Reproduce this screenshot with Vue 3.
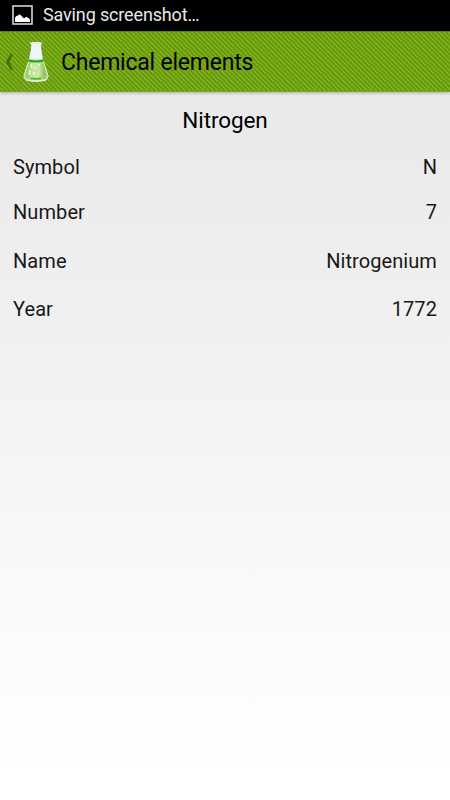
<script setup>
const rows = [
  { label: 'Symbol', value: 'N', size: 'h47' },
  { label: 'Number', value: '7', size: 'h43' },
  { label: 'Name', value: 'Nitrogenium', size: 'h55' },
  { label: 'Year', value: '1772', size: 'h41' },
]
</script>

<template>
  <div class="screen">
    <div class="status">
      <svg class="photo" width="21" height="20" viewBox="0 0 21 20">
        <rect x="1" y="1" width="19" height="18" fill="#000" stroke="#d6d6d6" stroke-width="1.6" />
        <path d="M3 17V12.5L4.5 11L6 10.5L7 9.5H8L10 11.5L12 13.5L14 11.8L16 12.8L18 14.5V17Z" fill="#fff" />
      </svg>
      <span class="status-text">Saving screenshot…</span>
    </div>
    <header class="bar">
      <svg class="back" width="10" height="18" viewBox="0 0 10 18">
        <path d="M8 1L3.6 9L8 17" fill="none" stroke="#47700c" stroke-width="2.9" />
      </svg>
      <svg class="flask" width="28" height="42" viewBox="0 0 28 42">
        <defs>
          <linearGradient id="liquid" x1="0" x2="1" y1="0" y2="0">
            <stop offset="0" stop-color="#8fc65c" />
            <stop offset=".3" stop-color="#c2e69e" />
            <stop offset=".65" stop-color="#c8eaa6" />
            <stop offset="1" stop-color="#84b952" />
          </linearGradient>
        </defs>
        <path d="M7 18L4.5 25L1.8 34.5Q1.2 38 5 39.5Q14 41.5 23 39.5Q26.8 38 26.2 34.5L23 25L21 18Z" fill="#c4dfa8" fill-opacity=".7" />
        <path d="M9.5 2.5H18.8L19.4 9L21 18.5H6.8L8.8 9Z" fill="#eef4f9" />
        <path d="M7 20H21L23.4 33Q24 37 20 37.5H8Q4 37 4.6 33Z" fill="url(#liquid)" />
        <path d="M6.6 18.6Q14 20.8 21.2 18.6V20.8Q14 22 6.6 20.8Z" fill="#16a81c" />
        <path d="M8 2.6Q14 1 20 2.6" fill="none" stroke="#fff" stroke-width="1.6" />
        <path d="M6.5 21L2.2 34Q1.4 38 5 39M21.5 21L25.8 34Q26.6 38 23 39" fill="none" stroke="#d9edc5" stroke-width="1" />
        <path d="M4 38.8Q14 41.4 24 38.8" fill="none" stroke="#e7f1dd" stroke-width="1.6" />
        <path d="M9 37.2Q14 38.2 19 37.2" fill="none" stroke="#4cba2c" stroke-width="1.5" />
        <path d="M9.5 23V27M7.5 29V34M13 26V28M12 31V33M17 23V25" stroke="#f4fdec" stroke-width="1.4" />
      </svg>
      <span class="title">Chemical elements</span>
    </header>
    <main class="content">
      <h1 class="name">Nitrogen</h1>
      <div v-for="row in rows" :key="row.label" class="row" :class="row.size">
        <span>{{ row.label }}</span>
        <span>{{ row.value }}</span>
      </div>
    </main>
  </div>
</template>

<style>
body { margin: 0; }
</style>

<style scoped>
.screen {
  width: 450px;
  height: 800px;
  overflow: hidden;
  display: flex;
  flex-direction: column;
  font-family: Roboto, "Liberation Sans", sans-serif;
  color: #000;
  background: linear-gradient(#e8e8e8 0, #ebebeb 160px, #f1f1f1 340px, #fbfbfb 630px, #fff 770px);
}
.status {
  height: 31px;
  flex: none;
  box-sizing: border-box;
  background: #000;
  color: #e8e8e8;
  display: flex;
  align-items: center;
  gap: 10px;
  padding: 0 0 1px 12px;
}
.status-text {
  font-size: 18px;
  line-height: 28px;
  letter-spacing: -0.15px;
}
.bar {
  height: 61px;
  flex: none;
  box-sizing: border-box;
  display: flex;
  align-items: center;
  padding-left: 4px;
  border-top: 1px solid #5b8116;
  border-bottom: 1px solid #77a52a;
  background: repeating-linear-gradient(45deg, #699c04 0, #699c04 1.5px, #80b02c 2.1px, #80b02c 2.9px, #699c04 3.3px);
  box-shadow: 0 1px 3px rgba(0, 0, 0, 0.28);
}
.back { margin-right: 8px; }
.title {
  font-size: 23px;
  letter-spacing: -0.22px;
  line-height: 28px;
  padding-top: 2px;
  margin-left: 11px;
}
.content { padding: 8px 13px 0; }
.name {
  margin: 0;
  height: 43px;
  line-height: 40px;
  font-size: 22.5px;
  letter-spacing: -0.1px;
  font-weight: 400;
  text-align: center;
}
.row {
  display: flex;
  justify-content: space-between;
  align-items: center;
  font-size: 20px;
  letter-spacing: 0.08px;
  color: #181818;
}
.h47 { height: 47px; }
.h43 { height: 43px; }
.h55 { height: 55px; }
.h41 { height: 41px; }
</style>
